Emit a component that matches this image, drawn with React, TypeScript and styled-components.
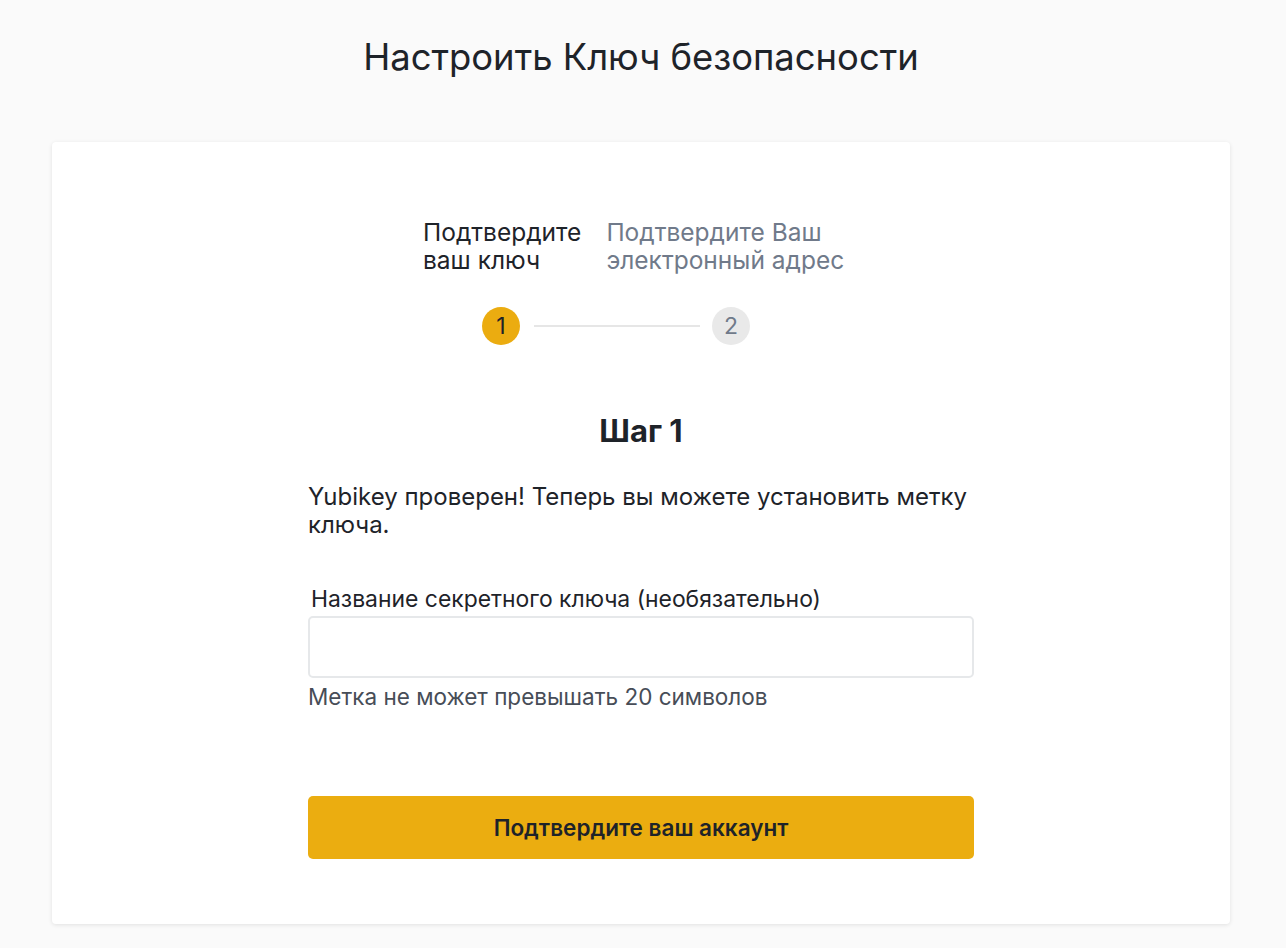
import React from "react";
import styled, { createGlobalStyle } from "styled-components";

const Global = createGlobalStyle`
  html, body { margin: 0; padding: 0; background: #fafafa; }
  body { font-family: Inter, "Noto Sans", sans-serif; color: #1e2329; }
  * { box-sizing: border-box; }
`;

const Page = styled.div`
  min-height: 948px;
  display: flex;
  flex-direction: column;
  padding: 0 56px 24px 52px;
`;

const Title = styled.h1`
  margin: 0;
  height: 142px;
  padding-top: 33px;
  font-size: 36.4px;
  font-weight: 400;
  line-height: 48px;
  text-align: center;
  color: #1e2329;
`;

const Card = styled.div`
  background: #fff;
  border-radius: 4px;
  box-shadow: 0 1px 4px rgba(0, 0, 0, 0.1);
  height: 782px;
  padding-top: 76px;
  display: flex;
  flex-direction: column;
  align-items: center;
`;

const Stepper = styled.div`
  display: flex;
  flex-direction: column;
  align-self: flex-start;
  margin-left: 371px;
`;

const LabelsRow = styled.div`
  display: flex;
  gap: 25px;
`;

const StepLabel = styled.div<{ $active?: boolean }>`
  font-size: 24.5px;
  line-height: 28px;
  color: ${(p) => (p.$active ? "#1e2329" : "#707a8a")};
`;

const CirclesRow = styled.div`
  display: flex;
  align-items: center;
  margin: 33px 0 0 59px;
`;

const Circle = styled.div<{ $active?: boolean }>`
  width: 38px;
  height: 38px;
  border-radius: 50%;
  display: flex;
  align-items: center;
  justify-content: center;
  font-size: 23px;
  background: ${(p) => (p.$active ? "#ebac10" : "#e9e9e9")};
  color: ${(p) => (p.$active ? "#1e2329" : "#707a8a")};
`;

const Line = styled.div`
  width: 166px;
  height: 2px;
  background: #e6e6e6;
  margin: 0 12px 0 14px;
`;

const Content = styled.div`
  width: 666px;
  display: flex;
  flex-direction: column;
`;

const StepTitle = styled.h2`
  margin: 68px 0 0;
  font-size: 31px;
  line-height: 36px;
  font-weight: 700;
  text-align: center;
  color: #1e2329;
`;

const Text = styled.p`
  margin: 34px 0 0;
  font-size: 24px;
  line-height: 28px;
  color: #1e2329;
`;

const FieldLabel = styled.label`
  margin: 46px 0 0 3px;
  font-size: 22.9px;
  line-height: 28px;
  color: #1e2329;
`;

const Input = styled.input`
  margin-top: 3px;
  height: 62px;
  width: 100%;
  border: 2px solid #e6e8ea;
  border-radius: 5px;
  outline: none;
  padding: 0 14px;
  font-size: 20px;
  font-family: inherit;
`;

const Hint = styled.div`
  margin-top: 5px;
  font-size: 22.5px;
  line-height: 28px;
  color: #474d57;
`;

const Button = styled.button`
  margin-top: 85px;
  height: 63px;
  width: 100%;
  border: none;
  border-radius: 5px;
  background: #ebad10;
  color: #1e2329;
  font-family: inherit;
  font-size: 22.5px;
  font-weight: 600;
  cursor: pointer;
`;

export default function App() {
  return (
    <>
      <Global />
      <Page>
        <Title>Настроить Ключ безопасности</Title>
        <Card>
          <Stepper>
            <LabelsRow>
              <StepLabel $active>
                Подтвердите
                <br />
                ваш ключ
              </StepLabel>
              <StepLabel>
                Подтвердите Ваш
                <br />
                электронный адрес
              </StepLabel>
            </LabelsRow>
            <CirclesRow>
              <Circle $active>1</Circle>
              <Line />
              <Circle>2</Circle>
            </CirclesRow>
          </Stepper>
          <Content>
            <StepTitle>Шаг 1</StepTitle>
            <Text>Yubikey проверен! Теперь вы можете установить метку ключа.</Text>
            <FieldLabel>Название секретного ключа (необязательно)</FieldLabel>
            <Input />
            <Hint>Метка не может превышать 20 символов</Hint>
            <Button>Подтвердите ваш аккаунт</Button>
          </Content>
        </Card>
      </Page>
    </>
  );
}
